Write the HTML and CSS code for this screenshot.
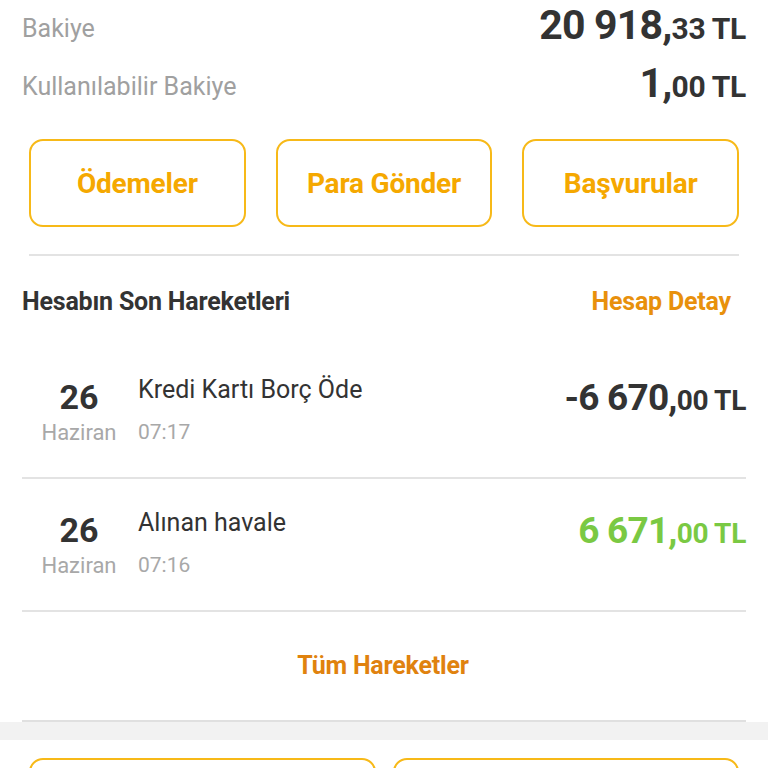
FILE: index.html
```html
<!DOCTYPE html>
<html lang="tr">
<head>
  <meta charset="UTF-8">
  <meta name="viewport" content="width=device-width, initial-scale=1.0">
  <title>Hesap</title>
  <link rel="stylesheet" href="styles.css">
</head>
<body>
  <div class="page">
    <div class="balance">
      <div class="balance-row">
        <span class="balance-label">Bakiye</span>
        <span class="money">20 918,<small>33 TL</small></span>
      </div>
      <div class="balance-row">
        <span class="balance-label">Kullanılabilir Bakiye</span>
        <span class="money">1,<small>00 TL</small></span>
      </div>
    </div>

    <div class="actions">
      <button class="action-btn">Ödemeler</button>
      <button class="action-btn">Para Gönder</button>
      <button class="action-btn">Başvurular</button>
    </div>

    <div class="divider"></div>

    <div class="section-head">
      <h2>Hesabın Son Hareketleri</h2>
      <a href="#" class="link">Hesap Detay</a>
    </div>

    <ul class="moves">
      <li class="move">
        <div class="date">
          <span class="day">26</span>
          <span class="month">Haziran</span>
        </div>
        <div class="info">
          <span class="title">Kredi Kartı Borç Öde</span>
          <span class="time">07:17</span>
        </div>
        <span class="amount">-6 670,<small>00 TL</small></span>
      </li>
      <li class="move">
        <div class="date">
          <span class="day">26</span>
          <span class="month">Haziran</span>
        </div>
        <div class="info">
          <span class="title">Alınan havale</span>
          <span class="time">07:16</span>
        </div>
        <span class="amount in">6 671,<small>00 TL</small></span>
      </li>
    </ul>

    <a href="#" class="all-link">Tüm Hareketler</a>
    <div class="bottom-line"></div>
  </div>

  <div class="band"></div>

  <div class="bottom-actions">
    <button class="action-btn wide"></button>
    <button class="action-btn wide"></button>
  </div>
</body>
</html>
```

FILE: styles.css
```css
body {
  margin: 0;
  padding: 0;
  background-color: #fff;
  font-family: Roboto, "Noto Sans", sans-serif;
  color: #333;
  overflow: hidden;
}

.page {
  padding: 0 22px;
}

.balance {
  margin-top: -4px;
}

.balance-row {
  display: flex;
  justify-content: space-between;
  align-items: center;
  height: 58px;
}

.balance-label {
  font-size: 25px;
  color: #a0a0a0;
  padding-top: 6px;
}

.money {
  font-size: 41px;
  font-weight: 700;
  color: #333;
  letter-spacing: -0.8px;
}

.money small {
  font-size: 30px;
  letter-spacing: -0.3px;
}

.actions {
  display: flex;
  gap: 30px;
  padding: 0 7px;
  margin-top: 27px;
}

.action-btn {
  flex: 1;
  height: 88px;
  border: 2px solid #f7b918;
  border-radius: 14px;
  background: #fff;
  color: #f5a800;
  font-family: Roboto, sans-serif;
  font-size: 28px;
  font-weight: 700;
  letter-spacing: -0.2px;
}

.divider {
  height: 2px;
  background: #e3e3e3;
  margin: 27px 7px 0;
}

.section-head {
  display: flex;
  justify-content: space-between;
  align-items: center;
  height: 90px;
}

.section-head h2 {
  margin: 0;
  font-size: 25px;
  font-weight: 700;
  color: #333;
  letter-spacing: -0.2px;
}

.link {
  color: #e8900c;
  font-size: 25px;
  font-weight: 700;
  text-decoration: none;
  margin-right: 15px;
  letter-spacing: -0.2px;
}

.moves {
  list-style: none;
  margin: 0;
  padding: 0;
}

.move {
  display: flex;
  align-items: flex-start;
  height: 133px;
  border-bottom: 2px solid #e3e3e3;
  box-sizing: border-box;
}

.date {
  width: 114px;
  display: flex;
  flex-direction: column;
  align-items: center;
  padding-top: 31px;
  box-sizing: border-box;
}

.day {
  font-size: 34px;
  font-weight: 700;
  line-height: 40px;
}

.month {
  font-size: 22px;
  color: #a8a8a8;
  line-height: 26px;
  margin-top: 3px;
}

.info {
  flex: 1;
  display: flex;
  flex-direction: column;
  padding-top: 28px;
  padding-left: 2px;
}

.title {
  font-size: 25px;
  line-height: 32px;
}

.time {
  font-size: 21px;
  color: #a8a8a8;
  line-height: 26px;
  margin-top: 13px;
}

.amount {
  font-size: 37px;
  font-weight: 700;
  padding-top: 30px;
  letter-spacing: -0.8px;
}

.amount small {
  font-size: 28px;
  letter-spacing: -0.3px;
}

.amount.in {
  color: #7ac943;
}

.all-link {
  display: block;
  text-align: center;
  color: #e0820e;
  font-size: 25px;
  font-weight: 700;
  text-decoration: none;
  line-height: 108px;
  margin-left: -2px;
  letter-spacing: -0.2px;
}

.bottom-line {
  height: 2px;
  background: #e0e0e0;
}

.band {
  height: 18px;
  background: #f2f2f2;
}

.bottom-actions {
  display: flex;
  gap: 17px;
  padding: 18px 29px 0;
}

.action-btn.wide {
  height: 60px;
}
```
